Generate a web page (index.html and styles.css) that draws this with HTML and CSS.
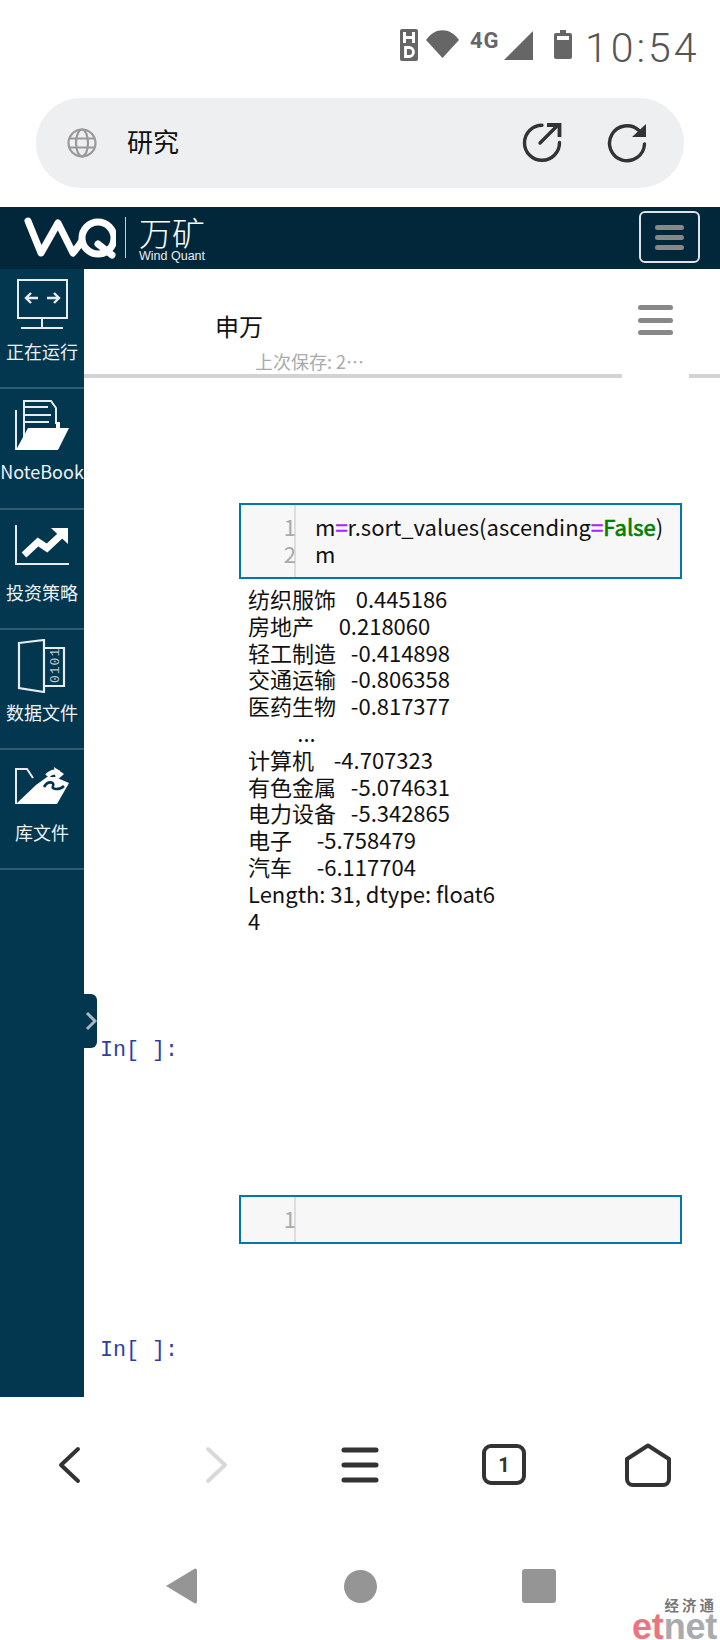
FILE: index.html
```html
<!DOCTYPE html>
<html lang="zh">
<head>
<meta charset="utf-8">
<title>研究</title>
<link rel="stylesheet" href="styles.css">
</head>
<body>
<div class="phone">
  <div class="status">
    <svg class="st-hd" viewBox="0 0 18 32"><rect width="18" height="32" rx="2" fill="#666"/><path d="M4.500 3v11M13.500 3v11M4.500 8.500h9" stroke="#fff" stroke-width="3" fill="none"/><path d="M5.500 18.500v9h3.500a4.500 4.500 0 0 0 0-9z" stroke="#fff" stroke-width="2.800" fill="none"/></svg>
    <svg class="st-wifi" viewBox="0 0 33 28"><path d="M0 10C9 -3 24 -3 33 10L16.500 28z" fill="#666"/></svg>
    <span class="st-4g">4G</span>
    <svg class="st-sig" viewBox="0 0 29 29"><path d="M29 0V29H0z" fill="#666"/></svg>
    <svg class="st-bat" viewBox="0 0 18 29"><path d="M6 0h6v3h4a2 2 0 0 1 2 2v22a2 2 0 0 1-2 2H2a2 2 0 0 1-2-2V5a2 2 0 0 1 2-2h4z" fill="#666"/><rect x="3" y="6" width="12" height="4" fill="#fff"/></svg>
    <span class="st-time">10:54</span>
  </div>

  <div class="address">
    <svg class="globe" viewBox="0 0 30 30" fill="none" stroke="#999" stroke-width="2.200"><circle cx="15" cy="15" r="13.500"/><ellipse cx="15" cy="15" rx="6" ry="13.500"/><path d="M2.500 10.500h25M2.500 19.500h25"/></svg>
    <span class="address-text">研究</span>
    <svg class="addr-icon open-icon" viewBox="0 0 40 40" fill="none" stroke="#333" stroke-width="3.400" stroke-linecap="round"><path d="M20 2.300A17.500 17.500 0 1 0 37.500 19.500"/><path d="M18 20L35 3"/><path d="M25 2H37.500V14" stroke-width="3.800" stroke-linecap="butt"/></svg>
    <svg class="addr-icon reload-icon" viewBox="0 0 40 40" fill="none" stroke="#333" stroke-width="3.400" stroke-linecap="round"><path d="M37.500 21A17.500 17.500 0 1 1 32 7.500"/><path d="M25 14H39V1z" fill="#333" stroke="none"/></svg>
  </div>

  <header class="topbar">
    <svg class="wq-logo" viewBox="0 0 92 44" fill="none" stroke="#fff" stroke-width="7" stroke-linecap="round" stroke-linejoin="round"><path d="M4 5L17 37L34 7L49 37C52 33 55 30 57 26"/><circle cx="74" cy="22" r="16"/><path d="M74 28L88 39"/></svg>
    <span class="logo-sep"></span>
    <div class="brand">
      <div class="brand-cn">万矿</div>
      <div class="brand-en">Wind Quant</div>
    </div>
    <button class="top-menu" type="button"><i></i><i></i><i></i></button>
  </header>

  <div class="workspace">
    <nav class="sidebar">
      <a class="side-item">
        <svg class="side-icon" viewBox="0 0 54 54" fill="none" stroke="#e6ecef" stroke-width="2"><rect x="3" y="2" width="49" height="38"/><path d="M27 40v10M6 50h42"/><path d="M23 20H12M16 15l-5 5 5 5M32 20h12M39 15l5 5-5 5" stroke-width="2.400"/></svg>
        <span>正在运行</span>
      </a>
      <a class="side-item">
        <svg class="side-icon" viewBox="0 0 54 54" fill="none" stroke="#e6ecef" stroke-width="2"><path d="M1 12v40"/><path d="M9 42V3H36L41 10V26"/><path d="M9 9H33M9 17H36M9 24H34" stroke-width="1.800"/><path d="M1 52L13 30H41V24H45V30H54L43 52z" fill="#fff" stroke="none"/></svg>
        <span>NoteBook</span>
      </a>
      <a class="side-item">
        <svg class="side-icon" viewBox="0 0 54 54" fill="none" stroke="#e6ecef" stroke-width="2"><path d="M1 6V45H54"/><path d="M9 36L23 23L32 29L46 16" stroke="#fff" stroke-width="7"/><path d="M36 9H53V25z" fill="#fff" stroke="none"/></svg>
        <span>投资策略</span>
      </a>
      <a class="side-item">
        <svg class="side-icon" viewBox="0 0 54 54" fill="none" stroke="#e6ecef" stroke-width="2.200"><path d="M4 4L29 1V53L4 49z"/><path d="M29 9H49V47H29"/><text class="bits" transform="translate(44 44) rotate(-90)">0101</text></svg>
        <span>数据文件</span>
      </a>
      <a class="side-item">
        <svg class="side-icon" viewBox="0 0 54 54" fill="none" stroke="#e6ecef" stroke-width="2"><path d="M1 45V10H12L18 19"/><path d="M1 45L21 26L32 18H40L54 24L42 45z" fill="#fff" stroke="none"/><path d="M32 17C36 13 40 12 44 14" stroke="#fff" stroke-width="5"/><path d="M39 8L49 15L41 22z" fill="#fff" stroke="none"/><path d="M29 28C33 21 40 23 38 27C36 31 45 31 49 27" stroke="#03364f" stroke-width="2.600"/></svg>
        <span>库文件</span>
      </a>
      <button class="collapse" type="button">
        <svg viewBox="0 0 12 20" fill="none" stroke="#aab8c0" stroke-width="3"><path d="M2 2l8 8-8 8"/></svg>
      </button>
    </nav>

    <main class="main">
      <div class="toolbar">
        <div class="title-block">
          <div class="nb-title">申万</div>
          <div class="nb-saved">上次保存: 2…</div>
        </div>
        <button class="nb-menu" type="button"><i></i><i></i><i></i></button>
        <span class="toolbar-gap"></span>
      </div>

      <section class="cell first-cell">
        <div class="editor">
          <div class="gutter"><div>1</div><div>2</div></div>
          <div class="code"><div>m<span class="op">=</span>r.sort_values(ascending<span class="op">=</span><span class="kw">False</span>)</div><div>m</div></div>
        </div>
        <pre class="output">纺织服饰    0.445186
房地产     0.218060
轻工制造   -0.414898
交通运输   -0.806358
医药生物   -0.817377
          ...
计算机    -4.707323
有色金属   -5.074631
电力设备   -5.342865
电子     -5.758479
汽车     -6.117704
Length: 31, dtype: float6
4</pre>
      </section>

      <div class="prompt prompt-a">In[ ]:</div>
      <div class="editor editor-empty">
        <div class="gutter"><div>1</div></div>
        <div class="code"></div>
      </div>
      <div class="prompt prompt-b">In[ ]:</div>
    </main>
  </div>

  <div class="browser-nav">
    <svg class="bn back" viewBox="0 0 24 38" fill="none" stroke="#333" stroke-width="4" stroke-linecap="round" stroke-linejoin="round"><path d="M20 3L3 19L20 35"/></svg>
    <svg class="bn fwd" viewBox="0 0 24 38" fill="none" stroke="#d9d9d9" stroke-width="4" stroke-linecap="round" stroke-linejoin="round"><path d="M4 3L21 19L4 35"/></svg>
    <svg class="bn menu" viewBox="0 0 38 36" fill="none" stroke="#333" stroke-width="5" stroke-linecap="round"><path d="M3 3H35M3 18H35M3 33H35"/></svg>
    <div class="tabs">1</div>
    <svg class="bn home" viewBox="0 0 46 44" fill="none" stroke="#333" stroke-width="4" stroke-linejoin="round"><path d="M23 2.500L44 16V36a6 6 0 0 1-6 6H8a6 6 0 0 1-6-6V16z"/></svg>
  </div>

  <div class="system-nav">
    <svg class="sys" viewBox="0 0 32 36" fill="#959595"><path d="M1 18L30 0.500Q32 0 32 3V33Q32 36 30 35.500z"/></svg>
    <span class="sys-circle"></span>
    <span class="sys-square"></span>
  </div>

  <div class="watermark">
    <div class="wm-cn">经济通</div>
    <div class="wm-en"><span>et</span>net</div>
  </div>
</div>
</body>
</html>
```

FILE: styles.css
```css
* { box-sizing: border-box; }
html, body { margin: 0; padding: 0; background: #fff; }
body { font-family: "Noto Sans CJK SC", "Noto Sans", sans-serif; color: #111; }
.phone { position: relative; width: 720px; height: 1640px; overflow: hidden; }
button { padding: 0; background: none; font: inherit; }

.status { height: 98px; display: flex; align-items: flex-start; padding: 29px 20px 0 400px; }
.st-hd { width: 18px; height: 32px; }
.st-wifi { width: 33px; height: 28px; margin: 1px 0 0 8px; }
.st-4g { width: 32px; margin: 0 0 0 11px; font: 700 22px/24px Roboto, sans-serif; letter-spacing: 1px; color: #666; height: 24px; }
.st-sig { width: 29px; height: 29px; margin: 2px 0 0 2px; }
.st-bat { width: 18px; height: 29px; margin: 1px 0 0 21px; }
.st-time { margin: -5px 0 0 13px; font: 300 41px/48px Roboto, sans-serif; letter-spacing: 3px; color: #555; white-space: nowrap; }

.address { margin: 0 36px; height: 90px; border-radius: 45px; background: #eeeff1; display: flex; align-items: center; padding-left: 31px; }
.globe { width: 30px; height: 30px; }
.address-text { margin: -4px 0 0 30px; font-size: 26px; line-height: 36px; color: #111; }
.addr-icon { width: 40px; height: 40px; }
.open-icon { margin-left: auto; }
.reload-icon { margin: 0 37px 0 45px; }

.topbar { margin-top: 19px; height: 62px; background: #03273a; display: flex; align-items: flex-start; padding: 9px 20px 0 24px; }
.wq-logo { width: 92px; height: 44px; }
.logo-sep { width: 1px; height: 41px; margin: 1px 0 0 9px; background: #c8d0d5; }
.brand { margin-left: 13px; color: #fff; width: 70px; }
.brand-cn { font-size: 33px; line-height: 31px; font-weight: 300; white-space: nowrap; padding-top: 1px; }
.brand-en { font: 400 12.500px/14px "Liberation Sans", sans-serif; color: #e8edf0; margin-top: 1px; white-space: nowrap; }
.top-menu { margin: -5px 0 0 auto; width: 61px; height: 52px; border: 2px solid #dfe3e5; border-radius: 6px; display: flex; flex-direction: column; align-items: center; justify-content: center; gap: 5px; }
.top-menu i { display: block; width: 29px; height: 5px; border-radius: 3px; background: #888; }

.workspace { display: flex; height: 1128px; }
.sidebar { position: relative; width: 84px; background: #03364f; flex: none; }
.side-item { display: flex; flex-direction: column; align-items: center; height: 120.300px; border-bottom: 2px solid #2f5a70; color: #edf1f3; font-size: 18px; line-height: 26px; white-space: nowrap; padding-top: 9px; }
.side-icon { width: 54px; height: 54px; flex: none; }
.side-item span { margin-top: 6px; }
.bits { font: 400 13px "Liberation Mono", monospace; letter-spacing: 1px; fill: #b9c6cd; stroke: none; }
.collapse { position: absolute; left: 84px; top: 725px; width: 13px; height: 54px; background: #03364f; border: 0; border-radius: 0 6px 6px 0; display: flex; align-items: center; justify-content: center; }
.collapse svg { width: 12px; height: 20px; flex: none; }

.main { flex: 1; min-width: 0; position: relative; }
.toolbar { height: 109px; border-bottom: 4px solid #d3d3d3; position: relative; display: flex; }
.title-block { margin-left: 131px; padding-top: 42px; }
.nb-title { font-size: 24px; line-height: 30px; color: #111; }
.nb-saved { margin: 7px 0 0 40px; font-size: 18px; line-height: 26px; color: #aaa; white-space: nowrap; }
.nb-menu { margin: 36px 47px 0 auto; width: 35px; height: 30px; border: 0; display: flex; flex-direction: column; justify-content: space-between; }
.nb-menu i { display: block; height: 5px; border-radius: 3px; background: #888; }
.toolbar-gap { position: absolute; left: 538px; bottom: -4px; width: 67px; height: 4px; background: #fff; }

.cell { margin: 125px 0 0 155px; width: 443px; }
.editor { border: 2px solid #0078a8; background: #f7f7f7; display: flex; height: 76px; width: 443px; }
.gutter { width: 55px; border-right: 2px solid #ddd; color: #aaa; text-align: right; font-size: 22px; line-height: 27px; padding-top: 8px; flex: none; }
.gutter div { margin-right: -2px; }
.code { padding: 8px 0 0 19px; font-size: 22px; line-height: 27px; color: #111; white-space: nowrap; }
.op { color: #a2f; -webkit-text-stroke: 0.700px #a2f; }
.kw { color: #008000; -webkit-text-stroke: 0.700px #008000; }
.output { margin: 6px 0 0 9px; height: 349px; font-family: "Noto Sans CJK SC", sans-serif; font-size: 22px; line-height: 26.800px; color: #111; white-space: pre; }

.prompt { font: 400 21.700px/26px "Liberation Mono", monospace; color: #303f9f; margin-left: 16px; }
.prompt-a { margin-top: 104px; }
.editor-empty { margin: 131px 0 0 155px; height: 49px; }
.prompt-b { margin-top: 94px; }

.browser-nav { height: 135px; display: grid; grid-template-columns: repeat(5, 1fr); justify-items: center; align-items: center; }
.back { width: 24px; height: 38px; margin-left: -4px; }
.fwd { width: 24px; height: 38px; }
.menu { width: 38px; height: 36px; }
.tabs { width: 44px; height: 41px; border: 4px solid #333; border-radius: 9px; display: flex; align-items: center; justify-content: center; font: 700 20px/24px Roboto, sans-serif; color: #333; }
.home { width: 46px; height: 44px; }

.system-nav { display: grid; grid-template-columns: repeat(3, 179px); justify-content: center; justify-items: center; align-items: center; height: 108px; }
.sys { width: 32px; height: 36px; }
.sys-circle { width: 33px; height: 33px; border-radius: 50%; background: #959595; }
.sys-square { width: 34px; height: 34px; border-radius: 3px; background: #959595; }

.watermark { position: absolute; right: 4px; bottom: 0; width: 84px; text-align: right; }
.wm-cn { font-size: 14.500px; line-height: 16px; letter-spacing: 3px; color: #777; font-weight: 700; margin-right: -1px; }
.wm-en { font: 700 36px/27px "Liberation Sans", sans-serif; letter-spacing: -0.200px; color: #a9abad; height: 27px; white-space: nowrap; }
.wm-en span { color: #e9757f; }
```
